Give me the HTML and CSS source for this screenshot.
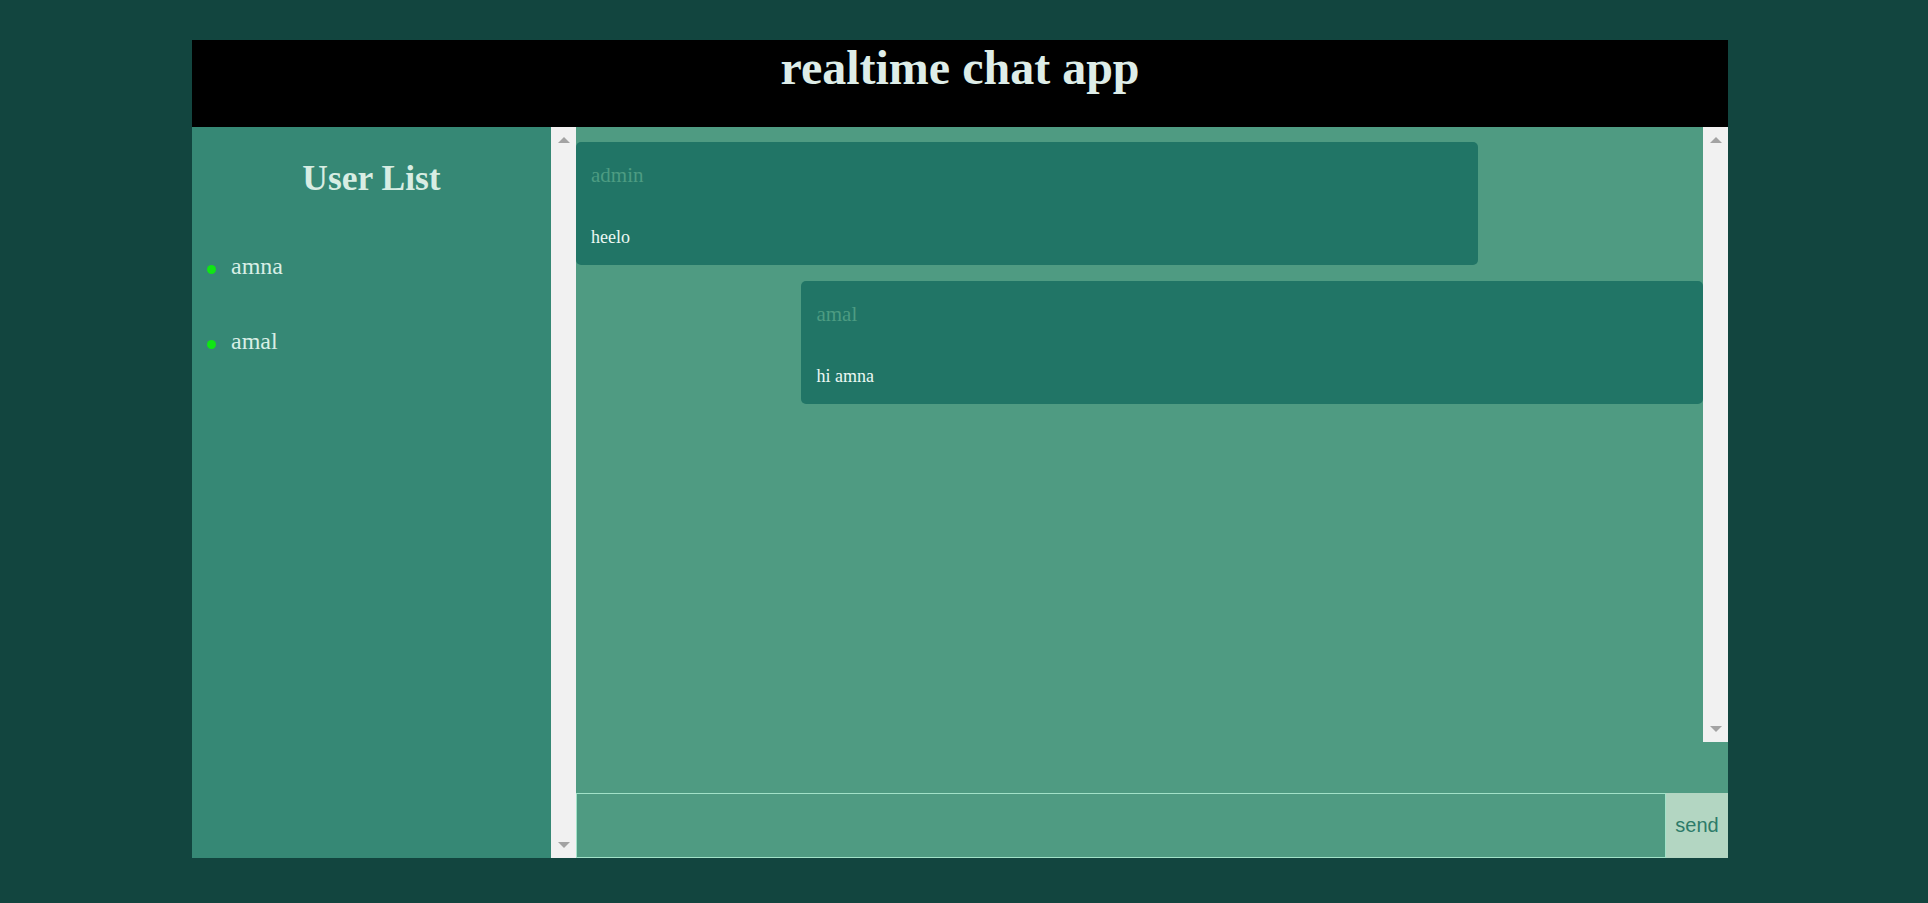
FILE: index.html
```html
<!DOCTYPE html>
<html lang="en">
<head>
<meta charset="utf-8">
<title>realtime chat app</title>
<link rel="stylesheet" href="styles.css">
</head>
<body>
<div class="app">
  <header class="app-header">
    <h1 class="app-title">realtime chat app</h1>
  </header>
  <main class="app-main">
    <aside class="sidebar">
      <div class="sidebar-content">
        <h2 class="sidebar-title">User List</h2>
        <ul class="user-list">
          <li class="user"><span class="user-dot"></span><span class="user-name">amna</span></li>
          <li class="user"><span class="user-dot"></span><span class="user-name">amal</span></li>
        </ul>
      </div>
      <div class="scrollbar">
        <span class="arrow arrow-up"></span>
        <span class="arrow arrow-down"></span>
      </div>
    </aside>
    <section class="chat">
      <div class="messages">
        <div class="message-list">
          <div class="bubble">
            <p class="bubble-name">admin</p>
            <p class="bubble-text">heelo</p>
          </div>
          <div class="bubble bubble-right">
            <p class="bubble-name">amal</p>
            <p class="bubble-text">hi amna</p>
          </div>
        </div>
        <div class="scrollbar">
          <span class="arrow arrow-up"></span>
          <span class="arrow arrow-down"></span>
        </div>
      </div>
      <form class="composer">
        <input class="composer-input" type="text">
        <button class="composer-send" type="button">send</button>
      </form>
    </section>
  </main>
</div>
</body>
</html>
```
FILE: styles.css
```css
* {
  box-sizing: border-box;
}

html, body {
  margin: 0;
  padding: 0;
}

body {
  background: #12453f;
  padding: 40px 8px 0 0;
  height: 903px;
  overflow: hidden;
  font-family: "Liberation Serif", "Times New Roman", serif;
}

.app {
  width: 1536px;
  margin: 0 auto;
}

.app-header {
  background: #000;
  height: 87px;
}

.app-title {
  margin: 0;
  text-align: center;
  font-size: 48px;
  line-height: 55px;
  font-weight: bold;
  color: #deede8;
}

.app-main {
  display: flex;
  height: 731px;
}

/* sidebar */
.sidebar {
  width: 384px;
  display: flex;
  background: #368875;
}

.sidebar-content {
  flex: 1;
  padding-top: 31px;
}

.sidebar-title {
  margin: 0;
  text-align: center;
  font-size: 35.5px;
  line-height: 40px;
  font-weight: bold;
  color: #d8ede3;
}

.user-list {
  list-style: none;
  margin: 54px 0 0;
  padding: 0 0 0 15px;
  display: flex;
  flex-direction: column;
  gap: 47px;
}

.user {
  display: flex;
  align-items: center;
  gap: 15px;
  font-size: 24px;
  line-height: 28px;
  color: #d9efe6;
}

.user-dot {
  width: 9px;
  height: 9px;
  border-radius: 50%;
  background: #10e614;
  margin-top: 6px;
}

/* fake scrollbar */
.scrollbar {
  width: 25px;
  flex: none;
  background: #f1f1f1;
  display: flex;
  flex-direction: column;
  justify-content: space-between;
  align-items: center;
  padding: 10px 0 10px;
}

.arrow {
  width: 0;
  height: 0;
  border-left: 6px solid transparent;
  border-right: 6px solid transparent;
}

.arrow-up {
  border-bottom: 6px solid #a3a3a3;
}

.arrow-down {
  border-top: 6px solid #a3a3a3;
}

/* chat */
.chat {
  flex: 1;
  display: flex;
  flex-direction: column;
  background: #4f9b82;
}

.messages {
  height: 615px;
  display: flex;
}

.message-list {
  flex: 1;
  overflow: hidden;
  display: flex;
  flex-direction: column;
  gap: 16px;
  padding-top: 15px;
}

.bubble {
  width: 80%;
  height: 123px;
  background: #217566;
  border-radius: 5px;
  padding: 21px 15px 17px;
}

.bubble-right {
  align-self: flex-end;
}

.bubble-name {
  margin: 0 0 39px;
  font-size: 21px;
  line-height: 24px;
  color: #4d9c82;
}

.bubble-text {
  margin: 0;
  font-size: 18px;
  line-height: 22px;
  color: #ecf8f3;
}

.composer {
  margin: 51px 0 0;
  display: flex;
  height: 65px;
}

.composer-input {
  flex: 1;
  margin: 0;
  background: #4f9b82;
  border: 1px solid #a2e2c8;
  outline: none;
  font-family: "Liberation Sans", Arial, sans-serif;
  font-size: 18px;
  color: #ffffff;
}

.composer-send {
  width: 62px;
  margin: 0;
  border: none;
  background: #b3d6c2;
  color: #2d7b69;
  font-family: "Liberation Sans", Arial, sans-serif;
  font-size: 20px;
  padding: 0;
  cursor: pointer;
}
```
